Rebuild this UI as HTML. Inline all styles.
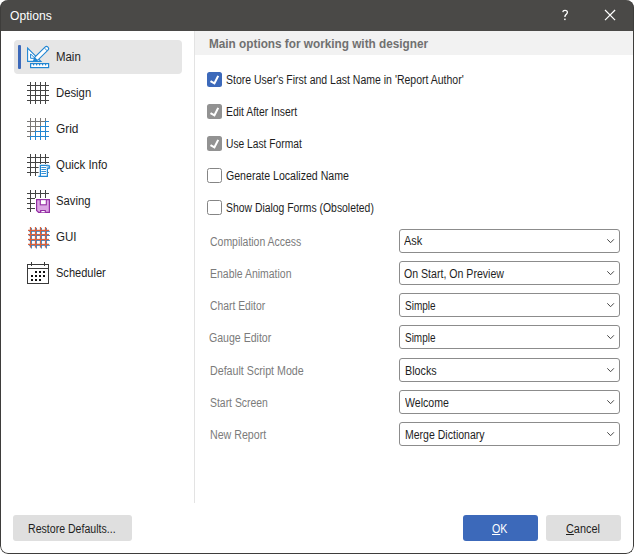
<!DOCTYPE html>
<html>
<head>
<meta charset="utf-8">
<title>Options</title>
<style>
*{box-sizing:border-box;margin:0;padding:0}
html,body{width:634px;height:554px;background:#fff;overflow:hidden}
body{font-family:"Liberation Sans",sans-serif;font-size:12px;color:#1e1e1e;position:relative}
.win{position:absolute;left:0;top:0;width:634px;height:554px;border-radius:8px;background:#fff;overflow:hidden}
.frame{position:absolute;left:0;top:0;width:634px;height:554px;border-radius:8px;border:1px solid #3e3d3b;border-top:none;pointer-events:none}
.title{position:absolute;left:0;top:0;width:634px;height:31px;background:#4a4947}
.abs{position:absolute}
.t{position:absolute;white-space:nowrap;line-height:14px;font-size:12px;transform-origin:0 0;color:#1e1e1e}
.t.w{color:#fff}
.t.g{color:#7b7b7b}
.t.h{color:#707070}
.sep{position:absolute;left:194px;top:31px;width:1px;height:472px;background:#e3e3e3}
.sel{position:absolute;left:14px;top:40px;width:168px;height:34px;background:#e6e6e6;border-radius:4px}
.bar{position:absolute;left:18px;top:45px;width:3px;height:24px;background:#3c69ba;border-radius:1px}
.hdr{position:absolute;left:195px;top:31px;width:439px;height:24px;background:#f2f2f2}
.cb{position:absolute;left:207px;width:15px;height:15px;border-radius:2.5px}
.cb.on{background:#3c69ba}
.cb.dis{background:#929292}
.cb.off{background:#fff;border:1px solid #858585}
.cb svg{position:absolute;left:0;top:0}
.combo{position:absolute;left:399px;width:221px;height:24px;border:1px solid #8c8c8c;border-radius:3px;background:#fff}
.btn{position:absolute;top:515px;height:26px;border-radius:3px;background:#dfdfdf}
.btn.pri{background:#3c69ba}
</style>
</head>
<body>
<div class="win">
  <div class="title"></div>

  <span class="t w" style="left:10.03px;top:9px;transform:scaleX(0.9303);font-size:13px;">Options</span>
  <svg class="abs" style="left:555px;top:5px" width="20" height="20" viewBox="555 5 20 20"><path d="M562.8 12.1 C562.9 10.9 563.9 10.3 565.0 10.3 C566.5 10.3 567.4 11.2 567.4 12.3 C567.4 13.6 566.3 14.2 565.6 15.0 C565.0 15.7 564.9 16.2 564.9 17.0" stroke="#fff" stroke-width="1.3" fill="none"/><rect x="564.15" y="18.6" width="1.5" height="1.5" fill="#fff"/></svg>
  <svg class="abs" style="left:604px;top:9px" width="13" height="13" viewBox="0 0 13 13"><path d="M1 1 L11.1 11.1 M11.1 1 L1 11.1" stroke="#fff" stroke-width="1.2" fill="none"/></svg>
  <div class="sep"></div>
  <div class="sel"></div>
  <div class="bar"></div>
  <svg class="abs" style="left:0;top:0" width="194" height="300" viewBox="0 0 194 300"><g fill="#fff" stroke="#2186d2" stroke-width="1.1" stroke-linejoin="miter"><path d="M27.6 48 L27.6 61.4 L41 61.4 Z"/><path d="M30.6 53.9 L30.6 58.3 L35 58.3 Z" stroke-width="1"/><path d="M33.5 61.5 L34.87 57.15 L44.98 47.05 A2.1 2.1 0 0 1 47.96 50.02 L37.85 60.13 Z" stroke-width="1.1"/><path d="M44.4 48.0 L47.0 50.6" fill="none" stroke-width="0.9"/></g><path d="M34.87 57.15 L37.85 60.13 L33.1 61.9 Z" fill="#2186d2"/><rect x="30.6" y="63.6" width="18" height="4" fill="#fff" stroke="#2186d2" stroke-width="1.2"/><rect x="33" y="64" width="1.2" height="1.4" fill="#2186d2"/><rect x="36" y="64" width="1.2" height="1.4" fill="#2186d2"/><rect x="39" y="64" width="1.2" height="1.4" fill="#2186d2"/><rect x="42" y="64" width="1.2" height="1.4" fill="#2186d2"/><rect x="45" y="64" width="1.2" height="1.4" fill="#2186d2"/><g shape-rendering="crispEdges"><rect x="30" y="82" width="1" height="22" fill="#444444"/><rect x="35" y="82" width="1" height="22" fill="#444444"/><rect x="40" y="82" width="1" height="22" fill="#444444"/><rect x="45" y="82" width="1" height="22" fill="#444444"/><rect x="27" y="85" width="22" height="1" fill="#444444"/><rect x="27" y="90" width="22" height="1" fill="#444444"/><rect x="27" y="95" width="22" height="1" fill="#444444"/><rect x="27" y="100" width="22" height="1" fill="#444444"/><rect x="30" y="118" width="1" height="22" fill="#7a7876"/><rect x="35" y="118" width="1" height="22" fill="#7a7876"/><rect x="40" y="118" width="1" height="22" fill="#7a7876"/><rect x="45" y="118" width="1" height="22" fill="#7a7876"/><rect x="27" y="121" width="22" height="1" fill="#7a7876"/><rect x="27" y="126" width="22" height="1" fill="#7a7876"/><rect x="27" y="131" width="22" height="1" fill="#7a7876"/><rect x="27" y="136" width="22" height="1" fill="#7a7876"/><rect x="30" y="136" width="1" height="4" fill="#2186d2"/><rect x="35" y="131" width="1" height="9" fill="#2186d2"/><rect x="40" y="126" width="1" height="14" fill="#2186d2"/><rect x="45" y="121" width="1" height="19" fill="#2186d2"/><rect x="45" y="121" width="4" height="1" fill="#2186d2"/><rect x="40" y="126" width="9" height="1" fill="#2186d2"/><rect x="35" y="131" width="14" height="1" fill="#2186d2"/><rect x="30" y="136" width="19" height="1" fill="#2186d2"/><rect x="30" y="154" width="1" height="22" fill="#444444"/><rect x="35" y="154" width="1" height="22" fill="#444444"/><rect x="40" y="154" width="1" height="22" fill="#444444"/><rect x="45" y="154" width="1" height="22" fill="#444444"/><rect x="27" y="157" width="22" height="1" fill="#444444"/><rect x="27" y="162" width="22" height="1" fill="#444444"/><rect x="27" y="167" width="22" height="1" fill="#444444"/><rect x="27" y="172" width="22" height="1" fill="#444444"/></g><path d="M38.6 164 L50.8 164 L50.8 170 L48.4 170 L48.4 177.6 L37.4 177.6 L37.4 175 L38.6 175 Z" fill="#fff"/><path d="M38.4 176.4 L40.4 176.4 L40.4 165.4 L47.4 165.4 L47.4 176.4 L40.4 176.4" fill="#fff" stroke="#2186d2" stroke-width="1.25"/><path d="M47.4 165.4 L49.2 165.4 Q49.6 165.4 49.6 166 L49.6 168.6 L47.4 168.6" fill="#fff" stroke="#2186d2" stroke-width="1"/><rect x="48.3" y="166.2" width="0.9" height="1.8" fill="#2186d2"/><rect x="41.3" y="167" width="4.7" height="0.9" fill="#2186d2"/><rect x="41.3" y="169" width="4.7" height="0.9" fill="#2186d2"/><rect x="41.3" y="171" width="4.7" height="0.9" fill="#2186d2"/><rect x="41.3" y="173" width="4.7" height="0.9" fill="#2186d2"/><g shape-rendering="crispEdges"><rect x="30" y="190" width="1" height="22" fill="#444444"/><rect x="35" y="190" width="1" height="8" fill="#444444"/><rect x="40" y="190" width="1" height="8" fill="#444444"/><rect x="45" y="190" width="1" height="8" fill="#444444"/><rect x="27" y="193" width="22" height="1" fill="#444444"/><rect x="27" y="198" width="8" height="1" fill="#444444"/><rect x="27" y="203" width="8" height="1" fill="#444444"/><rect x="27" y="208" width="8" height="1" fill="#444444"/></g><path d="M36.6 199.6 L49.4 199.6 L49.4 212.4 L38.6 212.4 L36.6 210.4 Z" fill="#dca6e4" stroke="#932ea3" stroke-width="1.2"/><rect x="40.3" y="199.6" width="6" height="5.2" fill="#fff" stroke="#932ea3" stroke-width="1.1"/><path d="M40.6 212.4 L40.6 210.6 L45.3 210.6 L45.3 212.4" fill="#dca6e4" stroke="#932ea3" stroke-width="1.1"/><rect x="41.6" y="211" width="3" height="1" fill="#fff"/><rect x="30.9" y="227.9" width="1.0" height="20.6" fill="#2f7fc6"/><rect x="35.9" y="227.9" width="1.0" height="20.6" fill="#2f7fc6"/><rect x="40.9" y="227.9" width="1.0" height="20.6" fill="#2f7fc6"/><rect x="45.9" y="227.9" width="1.0" height="20.6" fill="#2f7fc6"/><rect x="28.9" y="230.8" width="21" height="1.0" fill="#2f7fc6"/><rect x="28.9" y="235.0" width="21" height="1.0" fill="#2f7fc6"/><rect x="28.9" y="239.9" width="21" height="1.0" fill="#2f7fc6"/><rect x="28.9" y="244.8" width="21" height="1.0" fill="#2f7fc6"/><rect x="29.875" y="227" width="1.25" height="20.6" fill="#d9613c"/><rect x="34.875" y="227" width="1.25" height="20.6" fill="#d9613c"/><rect x="39.875" y="227" width="1.25" height="20.6" fill="#d9613c"/><rect x="44.875" y="227" width="1.25" height="20.6" fill="#d9613c"/><rect x="28" y="229.775" width="21" height="1.25" fill="#d9613c"/><rect x="28" y="233.975" width="21" height="1.25" fill="#d9613c"/><rect x="28" y="238.875" width="21" height="1.25" fill="#d9613c"/><rect x="28" y="243.775" width="21" height="1.25" fill="#d9613c"/><g shape-rendering="crispEdges"><rect x="27.5" y="264.5" width="21" height="19" fill="#fff" stroke="#3a3a3a" stroke-width="1"/><rect x="27" y="268" width="22" height="1" fill="#3a3a3a"/><rect x="31" y="262" width="1" height="4" fill="#3a3a3a"/><rect x="44" y="262" width="1" height="4" fill="#3a3a3a"/><rect x="35" y="271" width="2" height="2" fill="#111"/><rect x="39" y="271" width="2" height="2" fill="#111"/><rect x="43" y="271" width="2" height="2" fill="#111"/><rect x="31" y="275" width="2" height="2" fill="#111"/><rect x="35" y="275" width="2" height="2" fill="#111"/><rect x="39" y="275" width="2" height="2" fill="#111"/><rect x="43" y="275" width="2" height="2" fill="#111"/><rect x="31" y="279" width="2" height="2" fill="#111"/><rect x="35" y="279" width="2" height="2" fill="#111"/><rect x="39" y="279" width="2" height="2" fill="#111"/></g></svg>

  <span class="t " style="left:56.150000000000006px;top:50px;transform:scaleX(0.9519);;">Main</span>
  <span class="t " style="left:56.44px;top:86px;transform:scaleX(0.9418);;">Design</span>
  <span class="t " style="left:55.99px;top:122px;transform:scaleX(0.9924);;">Grid</span>
  <span class="t " style="left:56.22px;top:158px;transform:scaleX(0.953);;">Quick Info</span>
  <span class="t " style="left:55.54px;top:194px;transform:scaleX(0.9415);;">Saving</span>
  <span class="t " style="left:56.14px;top:230px;transform:scaleX(0.963);;">GUI</span>
  <span class="t " style="left:55.56px;top:266px;transform:scaleX(0.9205);;">Scheduler</span>
  <div class="hdr"></div>
  <span class="t h" style="left:208.94px;top:37px;transform:scaleX(0.981);font-weight:bold;">Main options for working with designer</span>
  <div class="cb on" style="top:72px"><svg width="15" height="15" viewBox="0 0 15 15"><path d="M3.5 9.1 L7.4 11.4 L11.2 3.9" stroke="#fff" stroke-width="2.1" fill="none" stroke-linejoin="miter"/></svg></div>
  <span class="t " style="left:225.78px;top:73px;transform:scaleX(0.8749);;">Store User's First and Last Name in 'Report Author'</span>
  <div class="cb dis" style="top:104px"><svg width="15" height="15" viewBox="0 0 15 15"><path d="M3.5 9.1 L7.4 11.4 L11.2 3.9" stroke="#fff" stroke-width="2.1" fill="none" stroke-linejoin="miter"/></svg></div>
  <span class="t " style="left:225.58px;top:105px;transform:scaleX(0.867);;">Edit After Insert</span>
  <div class="cb dis" style="top:136px"><svg width="15" height="15" viewBox="0 0 15 15"><path d="M3.5 9.1 L7.4 11.4 L11.2 3.9" stroke="#fff" stroke-width="2.1" fill="none" stroke-linejoin="miter"/></svg></div>
  <span class="t " style="left:225.53px;top:137px;transform:scaleX(0.8546);;">Use Last Format</span>
  <div class="cb off" style="top:168px"></div>
  <span class="t " style="left:225.91px;top:169px;transform:scaleX(0.8816);;">Generate Localized Name</span>
  <div class="cb off" style="top:200px"></div>
  <span class="t " style="left:226.49px;top:201px;transform:scaleX(0.866);;">Show Dialog Forms (Obsoleted)</span>
  <span class="t g" style="left:209.56px;top:235px;transform:scaleX(0.8721);;">Compilation Access</span>
  <span class="t g" style="left:209.98px;top:267px;transform:scaleX(0.8725);;">Enable Animation</span>
  <span class="t g" style="left:209.56px;top:299px;transform:scaleX(0.8608);;">Chart Editor</span>
  <span class="t g" style="left:209.43px;top:331px;transform:scaleX(0.8801);;">Gauge Editor</span>
  <span class="t g" style="left:209.95px;top:364px;transform:scaleX(0.8895);;">Default Script Mode</span>
  <span class="t g" style="left:210.42px;top:396px;transform:scaleX(0.8684);;">Start Screen</span>
  <span class="t g" style="left:209.95px;top:428px;transform:scaleX(0.8874);;">New Report</span>
  <div class="combo" style="top:229px"></div>
  <svg class="abs" style="left:606px;top:238px" width="10" height="7" viewBox="0 0 10 7"><path d="M1.3 1.3 L4.6 4.7 L7.9 1.3" stroke="#484848" stroke-width="1" fill="none"/></svg>
  <span class="t " style="left:404.0px;top:234px;transform:scaleX(0.9154);;">Ask</span>
  <div class="combo" style="top:261px"></div>
  <svg class="abs" style="left:606px;top:270px" width="10" height="7" viewBox="0 0 10 7"><path d="M1.3 1.3 L4.6 4.7 L7.9 1.3" stroke="#484848" stroke-width="1" fill="none"/></svg>
  <span class="t " style="left:403.52px;top:267px;transform:scaleX(0.8821);;">On Start, On Preview</span>
  <div class="combo" style="top:293px"></div>
  <svg class="abs" style="left:606px;top:302px" width="10" height="7" viewBox="0 0 10 7"><path d="M1.3 1.3 L4.6 4.7 L7.9 1.3" stroke="#484848" stroke-width="1" fill="none"/></svg>
  <span class="t " style="left:404.75px;top:299px;transform:scaleX(0.8326);;">Simple</span>
  <div class="combo" style="top:325px"></div>
  <svg class="abs" style="left:606px;top:334px" width="10" height="7" viewBox="0 0 10 7"><path d="M1.3 1.3 L4.6 4.7 L7.9 1.3" stroke="#484848" stroke-width="1" fill="none"/></svg>
  <span class="t " style="left:404.75px;top:331px;transform:scaleX(0.8292);;">Simple</span>
  <div class="combo" style="top:358px"></div>
  <svg class="abs" style="left:606px;top:367px" width="10" height="7" viewBox="0 0 10 7"><path d="M1.3 1.3 L4.6 4.7 L7.9 1.3" stroke="#484848" stroke-width="1" fill="none"/></svg>
  <span class="t " style="left:404.69px;top:364px;transform:scaleX(0.8952);;">Blocks</span>
  <div class="combo" style="top:390px"></div>
  <svg class="abs" style="left:606px;top:399px" width="10" height="7" viewBox="0 0 10 7"><path d="M1.3 1.3 L4.6 4.7 L7.9 1.3" stroke="#484848" stroke-width="1" fill="none"/></svg>
  <span class="t " style="left:405.35px;top:396px;transform:scaleX(0.8804);;">Welcome</span>
  <div class="combo" style="top:422px"></div>
  <svg class="abs" style="left:606px;top:431px" width="10" height="7" viewBox="0 0 10 7"><path d="M1.3 1.3 L4.6 4.7 L7.9 1.3" stroke="#484848" stroke-width="1" fill="none"/></svg>
  <span class="t " style="left:404.96000000000004px;top:428px;transform:scaleX(0.877);;">Merge Dictionary</span>
  <div class="btn" style="left:13px;width:119px"></div>
  <div class="btn pri" style="left:463px;width:75px"></div>
  <div class="btn" style="left:546px;width:75px"></div>
  <span class="t " style="left:27.57px;top:522px;transform:scaleX(0.8815);;">Restore Defaults...</span>
  <span class="t w" style="left:491.76000000000005px;top:522px;transform:scaleX(0.8886);;"><u>O</u>K</span>
  <span class="t " style="left:565.72px;top:522px;transform:scaleX(0.9076);;"><u>C</u>ancel</span>
  <div class="frame"></div>
</div>
</body>
</html>
